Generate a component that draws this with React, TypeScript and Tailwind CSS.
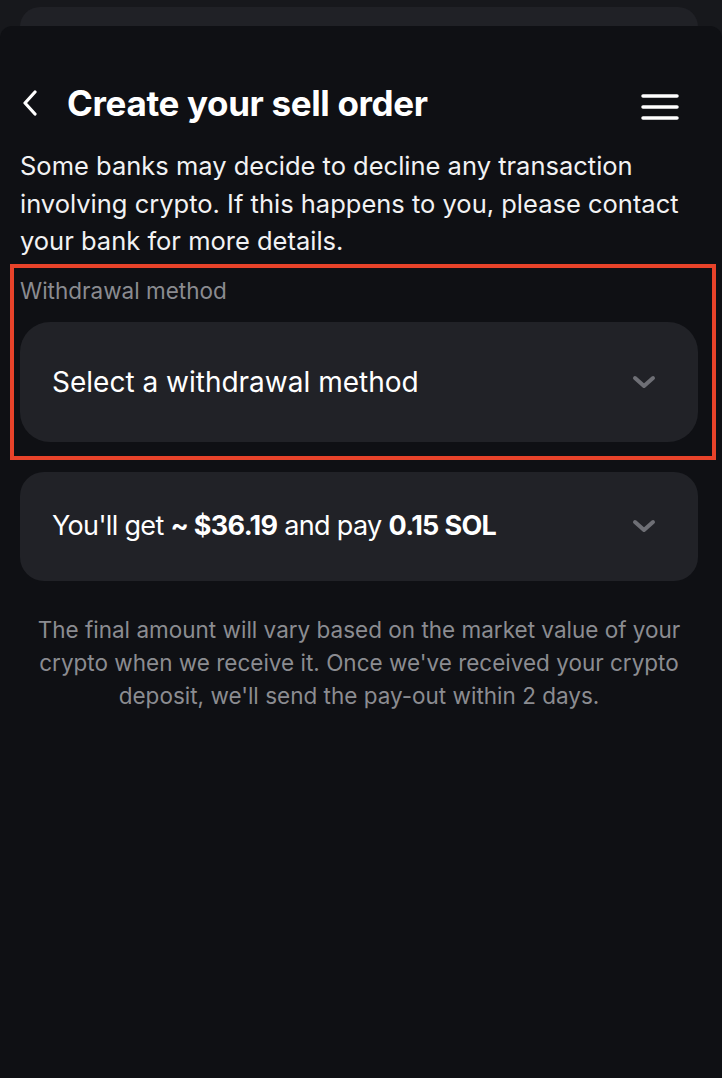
import React from "react";

function Chevron() {
  return (
    <svg width="24" height="14" viewBox="0 0 24 14" fill="none">
      <path d="M3 3l9 8 9-8" stroke="#6e6f75" strokeWidth="4" strokeLinecap="round" strokeLinejoin="round" />
    </svg>
  );
}

export default function App() {
  return (
    <div className="h-[1078px] w-[722px] overflow-hidden bg-[#17181c] font-['Inter',sans-serif] text-white">
      {/* card peeking behind the sheet */}
      <div className="pt-[7px] pl-5 pr-6">
        <div className="h-[40px] rounded-t-[20px] bg-[#202126]"></div>
      </div>

      <div className="-mt-[21px] h-[1052px] rounded-t-[12px] bg-[#0f1014] pl-5 pr-6 pt-[57px]">
        {/* header */}
        <div className="flex h-[40px] items-center justify-between">
          <div className="flex items-center">
            <svg width="16" height="26" viewBox="0 0 16 26" fill="none" className="ml-[2px]">
              <path d="M13 2L3 13l10 11" stroke="white" strokeWidth="3.2" strokeLinecap="round" strokeLinejoin="round" />
            </svg>
            <h1 className="ml-[29px] text-[35px] font-bold leading-[40px] tracking-[-0.01em]">Create your sell order</h1>
          </div>
          <svg width="40" height="28" viewBox="0 0 40 28" fill="none" className="mr-[18px] mt-[8px]">
            <path d="M3 3h34M3 14h34M3 25h34" stroke="white" strokeWidth="3.5" strokeLinecap="round" />
          </svg>
        </div>

        <p className="mt-[24px] text-[25.5px] leading-[37.5px] text-[#f2f2f3]">
          Some banks may decide to decline any transaction involving crypto. If this happens to you, please contact your bank for more details.
        </p>

        {/* highlighted withdrawal method */}
        <div className="-ml-[10px] -mr-[18px] mt-[4px] border-4 border-[#e8432a] pl-[6px] pr-[14px] pt-[8px] pb-[14px]">
          <div className="text-[22.5px] leading-[30px] text-[#8a8b90]">Withdrawal method</div>
          <button className="mt-[16px] flex h-[120px] w-full items-center justify-between rounded-[30px] bg-[#212227] pl-8 pr-[42px]">
            <span className="text-[28px] text-white">Select a withdrawal method</span>
            <Chevron />
          </button>
        </div>

        <button className="mt-3 flex h-[109px] w-full items-center justify-between rounded-[24px] bg-[#212227] pl-8 pr-[42px]">
          <span className="text-[27px] tracking-[-0.025em] text-white">
            You'll get <b className="font-bold">~ $36.19</b> and pay <b className="font-bold">0.15 SOL</b>
          </span>
          <Chevron />
        </button>

        <p className="mt-[32px] text-center text-[22.5px] leading-[33px] text-[#8b8c91]">
          The final amount will vary based on the market value of your crypto when we receive it. Once we've received your crypto deposit, we'll send the pay-out within 2 days.
        </p>
      </div>
    </div>
  );
}
